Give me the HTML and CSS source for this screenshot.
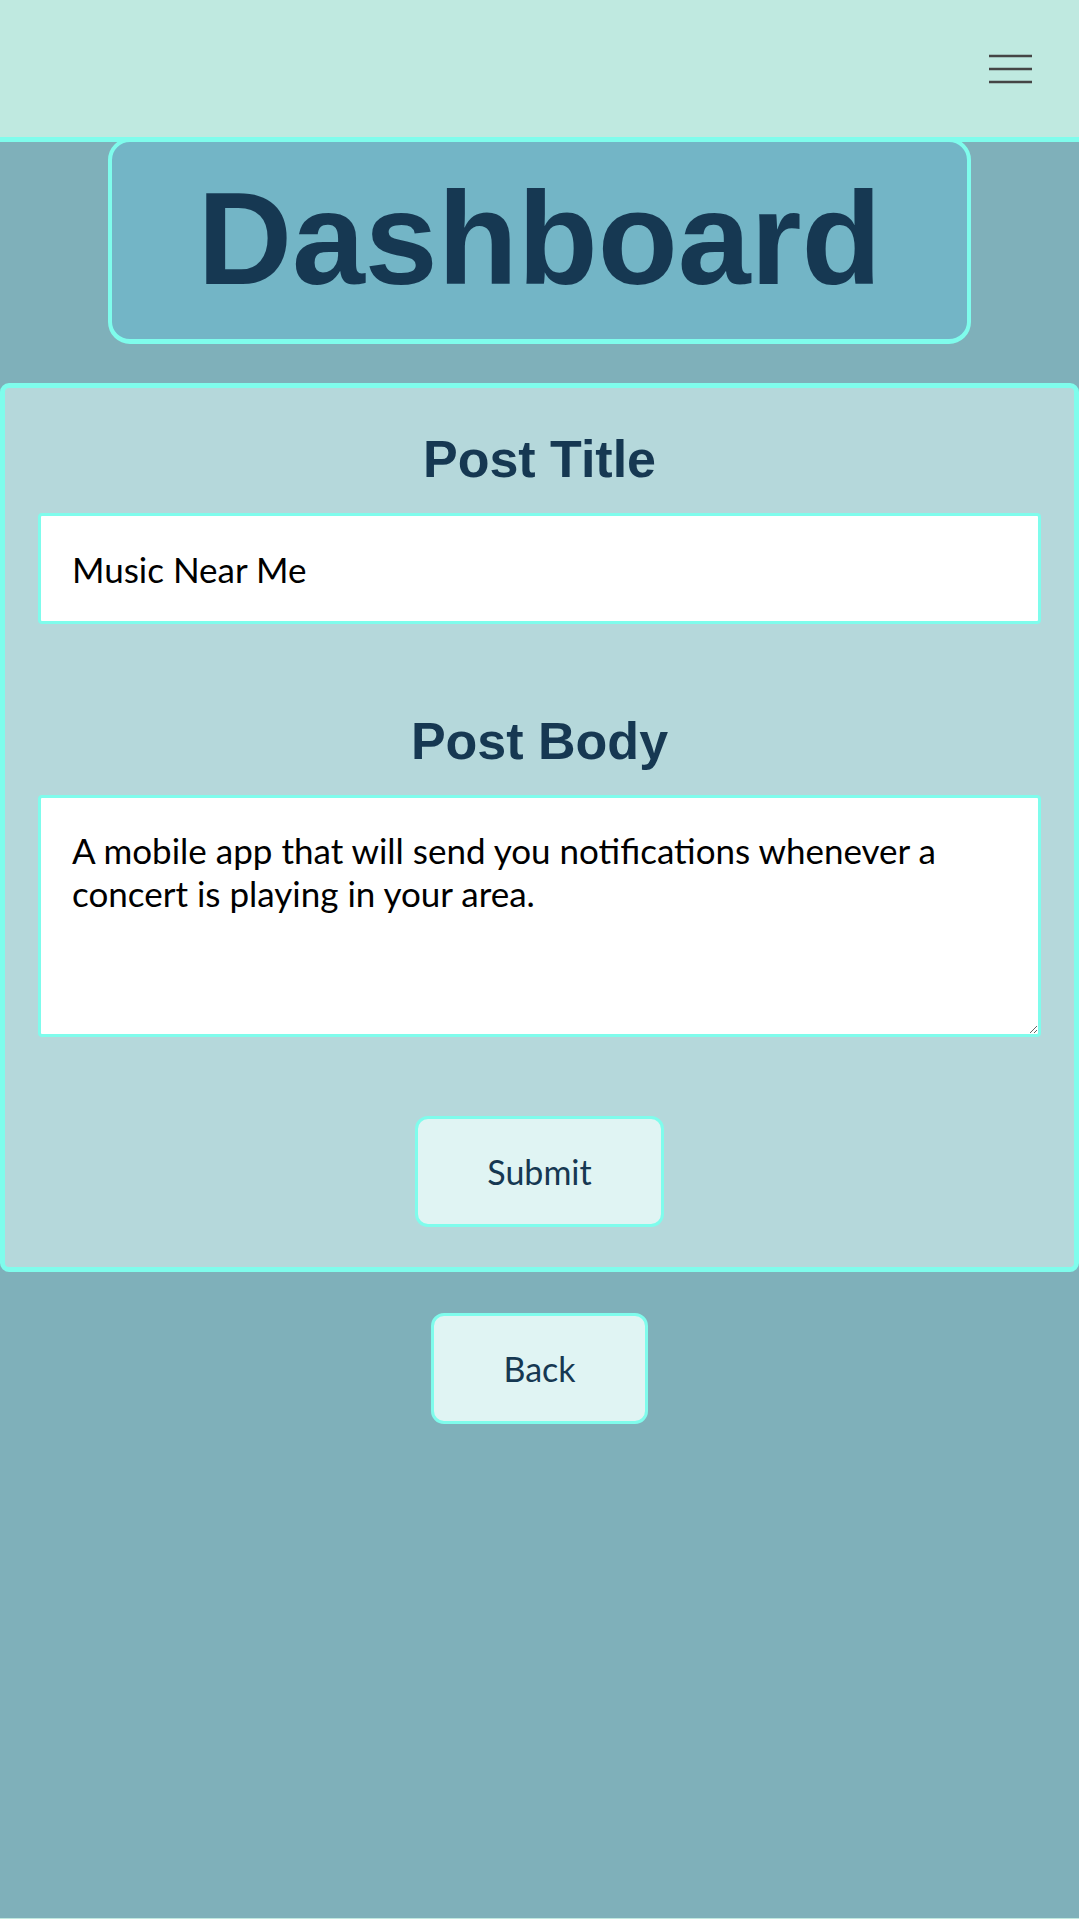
FILE: index.html
```html
<!DOCTYPE html>
<html lang="en">
<head>
<meta charset="utf-8">
<title>Dashboard</title>
<link rel="stylesheet" href="styles.css">
</head>
<body>
<div class="page">
  <header class="topbar">
    <button class="menu-btn" type="button" aria-label="Menu">
      <svg width="43" height="30" viewBox="0 0 43 30" aria-hidden="true">
        <path d="M0 2H43M0 15H43M0 28H43" stroke="#454545" stroke-width="2.6" fill="none"/>
      </svg>
    </button>
  </header>
  <main class="content">
    <div class="title-box">
      <h1 class="title">Dashboard</h1>
    </div>
    <form class="post-form">
      <h2 class="field-label">Post Title</h2>
      <input class="field-input" type="text" value="Music Near Me">
      <h2 class="field-label body-label">Post Body</h2>
      <textarea class="field-textarea">A mobile app that will send you notifications whenever a concert is playing in your area.</textarea>
      <button class="btn submit-btn" type="button">Submit</button>
    </form>
    <button class="btn back-btn" type="button">Back</button>
  </main>
</div>
</body>
</html>
```
FILE: styles.css
```css
* {
  box-sizing: border-box;
}

html,
body {
  margin: 0;
  padding: 0;
}

body {
  background: #c0e9e0;
  font-family: "Lato", "Open Sans", sans-serif;
}

.page {
  min-height: calc(100vh - 1px);
  background: #7fb0ba;
  display: flex;
  flex-direction: column;
}

.topbar {
  position: relative;
  z-index: 1;
  height: 142px;
  background: #bfe9e0;
  border-bottom: 5px solid #7ffcec;
  display: flex;
  justify-content: flex-end;
  align-items: center;
  padding-right: 47px;
}

.menu-btn {
  background: none;
  border: none;
  padding: 0;
  margin: 0;
  display: flex;
  cursor: pointer;
}

.content {
  display: flex;
  flex-direction: column;
  align-items: center;
  padding-bottom: 40px;
}

.title-box {
  width: 80%;
  margin-top: -4px;
  background: #73b5c6;
  border: 4px solid #7ffcec;
  border-bottom-width: 5px;
  border-radius: 22px;
  padding: 21px 0 25px;
  text-align: center;
}

.title {
  margin: 0;
  font-family: "Liberation Sans", Arial, sans-serif;
  font-weight: bold;
  font-size: 131px;
  line-height: normal;
  color: #163852;
}

.post-form {
  width: 100%;
  margin-top: 39px;
  background: #b5d8db;
  border: 5px solid #7ffcec;
  border-radius: 9px;
  padding: 41px 33px 40px;
  display: flex;
  flex-direction: column;
  align-items: center;
}

.field-label {
  margin: 0;
  font-family: "Liberation Sans", Arial, sans-serif;
  font-weight: bold;
  font-size: 52px;
  line-height: normal;
  color: #163852;
}

.body-label {
  margin-top: 87px;
}

.field-input,
.field-textarea {
  width: 100%;
  margin-top: 24px;
  background: #ffffff;
  border: 3px solid #7ffcec;
  border-radius: 4px;
  font-family: "Lato", "Open Sans", sans-serif;
  font-size: 35px;
  line-height: 43px;
  color: #000000;
  outline: none;
}

.field-input {
  height: 111px;
  padding: 0 31px;
}

.field-textarea {
  height: 242px;
  padding: 31px;
  display: block;
}

.btn {
  height: 111px;
  padding: 0 69px;
  background: #e0f4f3;
  border: 3px solid #7ffcec;
  border-radius: 13px;
  color: #163852;
  font-family: "Lato", "Open Sans", sans-serif;
  font-size: 34px;
  line-height: 43px;
  cursor: pointer;
}

.submit-btn {
  margin-top: 79px;
}

.back-btn {
  margin-top: 41px;
}
```
